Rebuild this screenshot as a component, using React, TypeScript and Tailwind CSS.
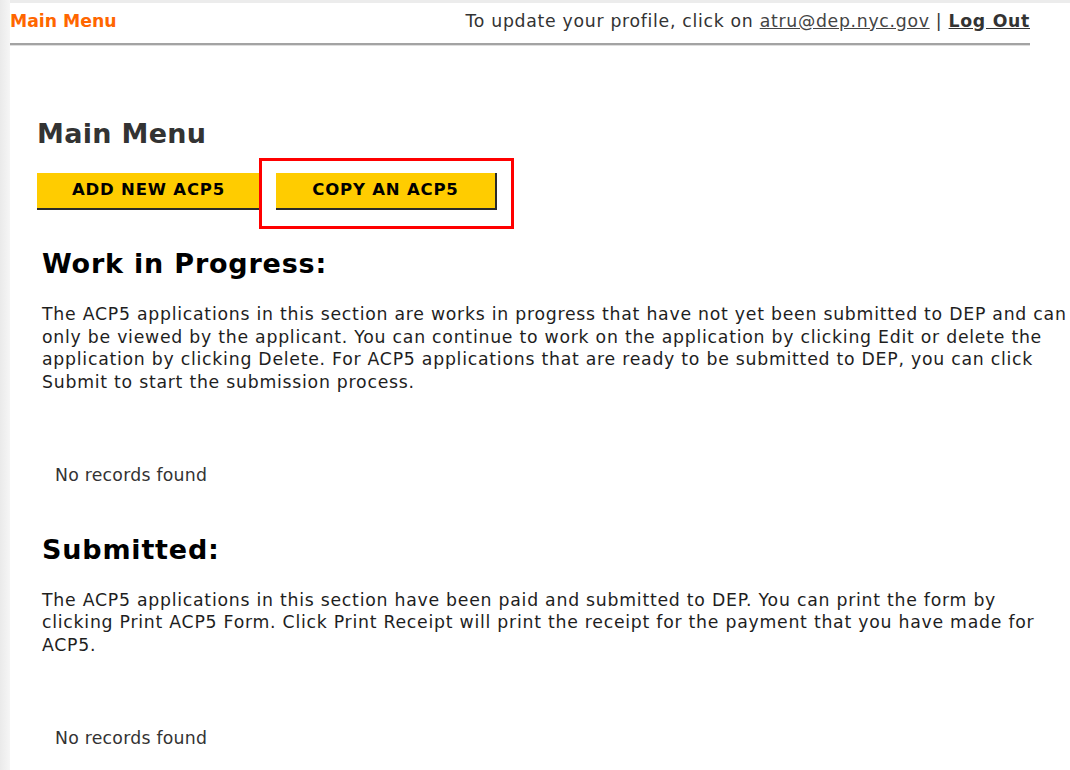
const body = "font-['DejaVu_Sans','Verdana',sans-serif]";

const wipLines = [
  "The ACP5 applications in this section are works in progress that have not yet been submitted to DEP and can",
  "only be viewed by the applicant. You can continue to work on the application by clicking Edit or delete the",
  "application by clicking Delete. For ACP5 applications that are ready to be submitted to DEP, you can click",
  "Submit to start the submission process.",
];

const submittedLines = [
  "The ACP5 applications in this section have been paid and submitted to DEP. You can print the form by",
  "clicking Print ACP5 Form. Click Print Receipt will print the receipt for the payment that you have made for",
  "ACP5.",
];

function Section({ title, lines, first }: { title: string; lines: string[]; first?: boolean }) {
  return (
    <section className={first ? "mt-[38px]" : "mt-[47px]"}>
      <h2 className="pl-[5px] text-[27px] leading-[32px] font-bold tracking-[0.8px] text-black">{title}</h2>
      <p className="mt-[23px] pl-[5px] text-[17.3px] leading-[22.7px] tracking-[0.75px] text-[#1e1e1e] whitespace-nowrap">
        {lines.map((line, i) => (
          <span key={i} className="block">
            {line}
          </span>
        ))}
      </p>
      <div className="mt-[70px] pl-[18px] text-[17.3px] leading-[22.7px] tracking-[0.25px] text-[#333]">
        No records found
      </div>
    </section>
  );
}

export default function App() {
  return (
    <div className={`min-h-screen w-full overflow-hidden bg-white flex ${body}`}>
      {/* page gutter */}
      <div className="w-[10px] shrink-0 bg-gradient-to-r from-[#eaeaea] to-[#f6f6f6]" />

      <div className="flex-1 min-w-0">
        <div className="h-[3px] bg-[#ececec]" />

        {/* Top bar */}
        <div className="w-[1020px]">
          <div className="h-[37px] flex items-center justify-between">
            <span className="text-[17.3px] font-bold text-[#ff6600]">Main Menu</span>
            <span className="text-[17.3px] tracking-[0.7px] text-[#333]">
              To update your profile, click on{" "}
              <a className="underline text-[#444]">atru@dep.nyc.gov</a> |{" "}
              <a className="underline font-bold text-[#333]">Log Out</a>
            </span>
          </div>
          <div className="mt-[3px] h-[2px] bg-[#a3a3a3]" />
          <div className="h-[1px] bg-[#dedede]" />
        </div>

        <main className="pl-[27px]">
          <h1 className="mt-[72px] text-[27px] leading-[32px] font-bold tracking-[0.3px] text-[#333]">Main Menu</h1>

          <div className="relative mt-[23px] flex gap-[14px]">
            <button className="w-[225px] h-[37px] bg-[#ffcc00] border-r-2 border-b-2 border-[#2a2a2a] text-[16.5px] font-bold tracking-[0.8px] text-black">
              ADD NEW ACP5
            </button>
            <button className="w-[221px] h-[37px] bg-[#ffcc00] border-r-2 border-b-2 border-[#2a2a2a] text-[16.5px] font-bold tracking-[0.8px] text-black">
              COPY AN ACP5
            </button>
            {/* highlight outline */}
            <div className="absolute left-[222px] top-[-15px] w-[255px] h-[71px] border-[3px] border-[#ff0000] pointer-events-none" />
          </div>

          <Section title="Work in Progress:" lines={wipLines} first />
          <Section title="Submitted:" lines={submittedLines} />
        </main>
      </div>
    </div>
  );
}
